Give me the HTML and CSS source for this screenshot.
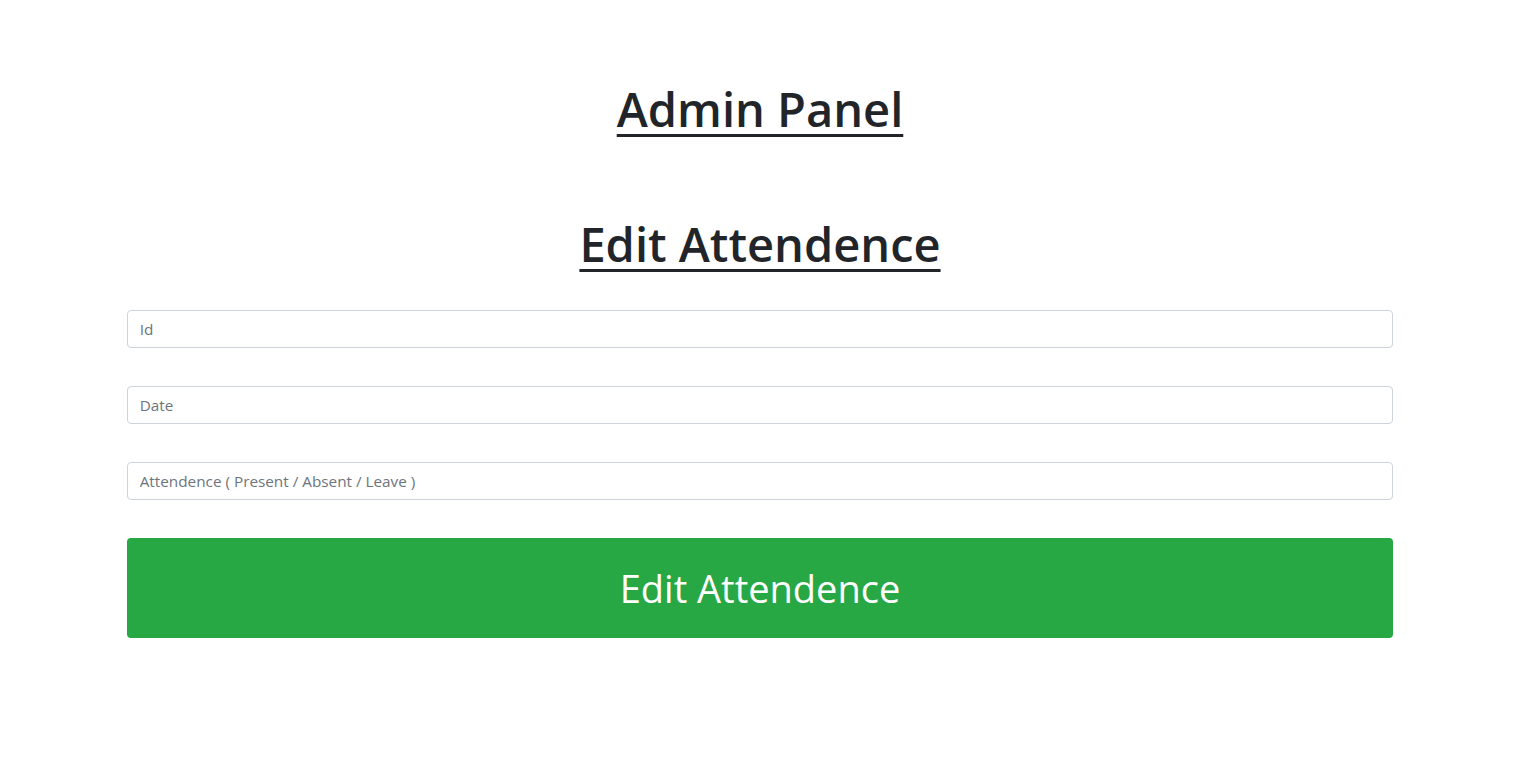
FILE: index.html
```html
<!DOCTYPE html>
<html>
<head>
<meta charset="utf-8">
<link rel="stylesheet" href="styles.css">
</head>
<body>
<main class="page">
  <h1 class="title">Admin Panel</h1>
  <h1 class="subtitle">Edit Attendence</h1>
  <form class="form">
    <input class="field" type="text" placeholder="Id">
    <input class="field" type="text" placeholder="Date">
    <input class="field" type="text" placeholder="Attendence ( Present / Absent / Leave )">
    <button class="btn" type="button">Edit Attendence</button>
  </form>
</main>
</body>
</html>
```
FILE: styles.css
```css
* { box-sizing: border-box; }
body {
  margin: 0;
  background: #fff;
  color: #212529;
  font-family: "Open Sans", "Noto Sans", sans-serif;
}
.page {
  padding-top: 81px;
  display: flex;
  flex-direction: column;
  align-items: center;
}
.title, .subtitle {
  margin: 0;
  font-size: 47px;
  font-weight: 600;
  line-height: 1.2;
  text-decoration: underline;
  text-decoration-thickness: 3px;
  text-underline-offset: 7px;
  color: #212529;
}
.title { margin-bottom: 79px; }
.subtitle { margin-bottom: 37px; }
.form {
  width: 83.333%;
  display: flex;
  flex-direction: column;
  gap: 38px;
}
.field {
  height: 38px;
  border: 1px solid #ced4da;
  border-radius: 4px;
  padding: 0 12px;
  font-family: inherit;
  font-size: 15.3px;
  color: #495057;
}
.field::placeholder { color: #6c757d; }
.btn {
  height: 100px;
  border: none;
  border-radius: 4px;
  background: #28a745;
  color: #fff;
  font-family: inherit;
  font-size: 38px;
}
```
